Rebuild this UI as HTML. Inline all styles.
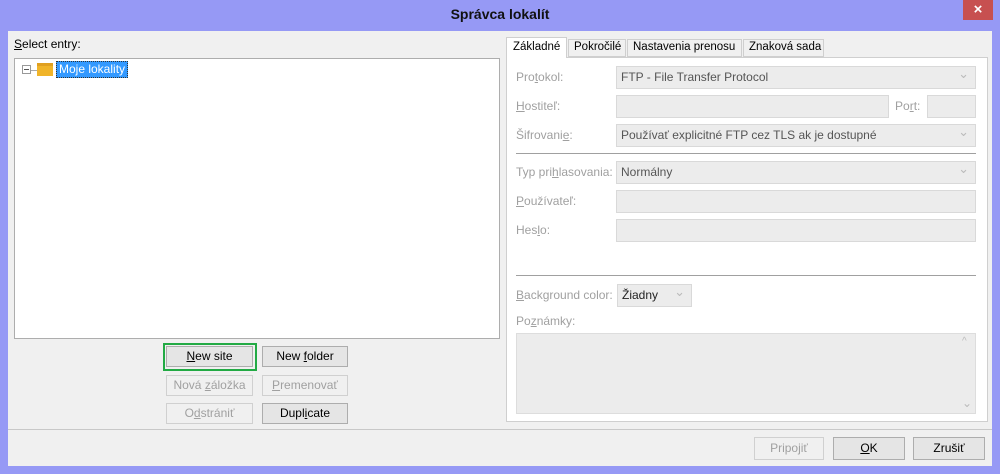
<!DOCTYPE html><html><head><meta charset="utf-8"><style>
body{margin:0;width:1000px;height:474px;background:#9699f5;font-family:"Segoe UI","Liberation Sans",sans-serif;font-size:12px;position:relative;overflow:hidden}
div{position:absolute;box-sizing:border-box}
.cl{left:8px;top:31px;width:984px;height:435px;background:#f0f0f0}
.t{white-space:nowrap}
.g{color:#a0a0a0}
.box{background:#ececec;border:1px solid #d9d9d9}
.cb{background:#ececec;border:1px solid #d9d9d9;padding:3px 4px;color:#555}
.cb:after{content:"⌄";position:absolute;right:6px;top:-1px;color:#bbb;font-size:13px}
.btn{background:#e5e5e5;border:1px solid #adadad;text-align:center;line-height:19px;color:#000}
.btn.d{background:#f0f0f0;border-color:#d0d0d0;color:#a0a0a0}
.tab{font-size:11.5px}
u{text-decoration:underline}
</style></head><body>
<div class="t" style="left:0;top:6px;width:1000px;text-align:center;font-weight:bold;font-size:14px;color:#111">Správca lokalít</div>
<div style="left:963px;top:0;width:30px;height:20px;background:#c75050;color:#fff;text-align:center;font-size:15px;line-height:20px;font-weight:bold">×</div>
<div class="cl"></div>
<div class="t" style="left:14px;top:37px"><u>S</u>elect entry:</div>
<div style="left:14px;top:58px;width:486px;height:281px;background:#fff;border:1px solid #adadad"></div>
<div style="left:22px;top:65px;width:9px;height:9px;border:1px solid #999;background:#fff"></div>
<div style="left:24px;top:69px;width:5px;height:1px;background:#555"></div>
<div style="left:31px;top:70px;width:6px;height:1px;background:#aaa"></div>
<div style="left:37px;top:63px;width:16px;height:13px;background:#f0b429;border-top:3px solid #e0a020"></div>
<div class="t" style="left:56px;top:61px;height:17px;padding:0 2px;background:#3399ff;color:#fff;border:1px dotted #333;line-height:14px">Moje lokality</div>
<div class="btn" style="left:163px;top:343px;width:94px;height:28px;border:2px solid #22aa44;background:#f0f0f0"></div>
<div class="btn" style="left:166px;top:346px;width:87px;height:21px"><u>N</u>ew site</div>
<div class="btn" style="left:262px;top:346px;width:86px;height:21px">New <u>f</u>older</div>
<div class="btn d" style="left:166px;top:375px;width:87px;height:21px">Nová <u>z</u>áložka</div>
<div class="btn d" style="left:262px;top:375px;width:86px;height:21px"><u>P</u>remenovať</div>
<div class="btn d" style="left:166px;top:403px;width:87px;height:21px">O<u>d</u>strániť</div>
<div class="btn" style="left:262px;top:403px;width:86px;height:21px">Dupl<u>i</u>cate</div>
<div style="left:506px;top:57px;width:482px;height:365px;background:#fff;border:1px solid #cfcfcf"></div>
<div class="t tab" style="left:506px;top:37px;width:61px;height:21px;background:#fff;border:1px solid #cfcfcf;border-bottom:none;padding:3px 0 0 6px">Základné</div>
<div class="t tab" style="left:568px;top:39px;width:58px;height:18px;background:#f0f0f0;border:1px solid #cfcfcf;padding:1px 0 0 5px">Pokročilé</div>
<div class="t tab" style="left:627px;top:39px;width:115px;height:18px;background:#f0f0f0;border:1px solid #cfcfcf;padding:1px 0 0 5px">Nastavenia prenosu</div>
<div class="t tab" style="left:743px;top:39px;width:81px;height:18px;background:#f0f0f0;border:1px solid #cfcfcf;padding:1px 0 0 5px">Znaková sada</div>
<div class="t g" style="left:516px;top:70px">Pro<u>t</u>okol:</div>
<div class="cb t" style="left:616px;top:66px;width:360px;height:23px">FTP - File Transfer Protocol</div>
<div class="t g" style="left:516px;top:99px"><u>H</u>ostiteľ:</div>
<div class="box" style="left:616px;top:95px;width:273px;height:23px"></div>
<div class="t g" style="left:895px;top:99px">Po<u>r</u>t:</div>
<div class="box" style="left:927px;top:95px;width:49px;height:23px"></div>
<div class="t g" style="left:516px;top:128px">Šifrovani<u>e</u>:</div>
<div class="cb t" style="left:616px;top:124px;width:360px;height:23px">Používať explicitné FTP cez TLS ak je dostupné</div>
<div style="left:516px;top:153px;width:460px;height:1px;background:#a0a0a0"></div>
<div class="t g" style="left:516px;top:165px">Typ pri<u>h</u>lasovania:</div>
<div class="cb t" style="left:616px;top:161px;width:360px;height:23px">Normálny</div>
<div class="t g" style="left:516px;top:194px"><u>P</u>oužívateľ:</div>
<div class="box" style="left:616px;top:190px;width:360px;height:23px"></div>
<div class="t g" style="left:516px;top:223px">Hes<u>l</u>o:</div>
<div class="box" style="left:616px;top:219px;width:360px;height:23px"></div>
<div style="left:516px;top:275px;width:460px;height:1px;background:#a0a0a0"></div>
<div class="t g" style="left:516px;top:288px"><u>B</u>ackground color:</div>
<div class="cb t" style="left:617px;top:284px;width:75px;height:23px;color:#222">Žiadny</div>
<div class="t g" style="left:516px;top:314px">Po<u>z</u>námky:</div>
<div class="box" style="left:516px;top:333px;width:460px;height:81px;border-color:#ddd"></div>
<div class="t" style="left:962px;top:336px;color:#bbb;font-size:10px">^</div>
<div class="t" style="left:962px;top:396px;color:#bbb;font-size:12px">⌄</div>
<div style="left:8px;top:429px;width:984px;height:1px;background:#c8c8c8"></div>
<div class="btn d" style="left:754px;top:437px;width:70px;height:23px;line-height:21px">Pripojiť</div>
<div class="btn" style="left:833px;top:437px;width:72px;height:23px;line-height:21px"><u>O</u>K</div>
<div class="btn" style="left:913px;top:437px;width:72px;height:23px;line-height:21px">Zrušiť</div>
</body></html>
